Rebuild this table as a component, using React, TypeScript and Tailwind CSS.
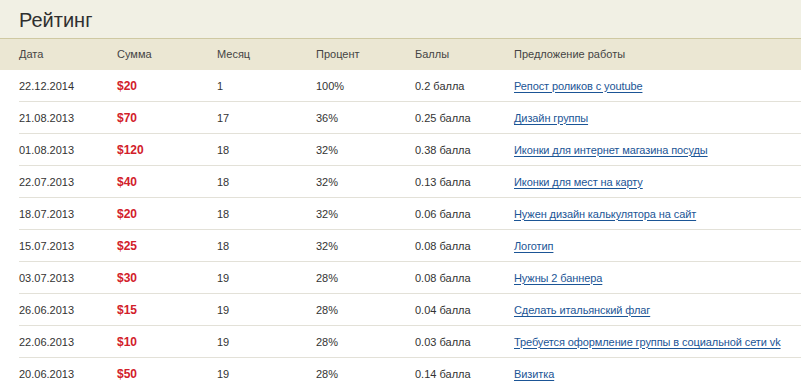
import React from "react";

const rows: [string, string, string, string, string, string][] = [
  ["22.12.2014", "$20", "1", "100%", "0.2 балла", "Репост роликов с youtube"],
  ["21.08.2013", "$70", "17", "36%", "0.25 балла", "Дизайн группы"],
  ["01.08.2013", "$120", "18", "32%", "0.38 балла", "Иконки для интернет магазина посуды"],
  ["22.07.2013", "$40", "18", "32%", "0.13 балла", "Иконки для мест на карту"],
  ["18.07.2013", "$20", "18", "32%", "0.06 балла", "Нужен дизайн калькулятора на сайт"],
  ["15.07.2013", "$25", "18", "32%", "0.08 балла", "Логотип"],
  ["03.07.2013", "$30", "19", "28%", "0.08 балла", "Нужны 2 баннера"],
  ["26.06.2013", "$15", "19", "28%", "0.04 балла", "Сделать итальянский флаг"],
  ["22.06.2013", "$10", "19", "28%", "0.03 балла", "Требуется оформление группы в социальной сети vk"],
  ["20.06.2013", "$50", "19", "28%", "0.14 балла", "Визитка"],
];

const grid = "grid grid-cols-[98px_100px_99px_99px_99px_1fr] items-center";

export default function App() {
  return (
    <div className="w-[801px] h-[385px] overflow-hidden bg-white font-['Liberation_Sans',Arial,sans-serif] text-[11px] text-[#333]">
      <div className="h-[38px] bg-[#f1f0e4] pl-[19px] flex items-center">
        <h1 className="text-[20px] leading-none text-[#2f2f2f] pt-[1px]">Рейтинг</h1>
      </div>
      <div className="h-[1px] bg-[#cfc9a2]" />
      <div className={`${grid} h-[31px] bg-[#ebe7d3] pl-[19px] text-[#444]`}>
        <div>Дата</div>
        <div>Сумма</div>
        <div>Месяц</div>
        <div>Процент</div>
        <div>Баллы</div>
        <div>Предложение работы</div>
      </div>
      <div className="pl-[19px]">
        {rows.map((r, i) => (
          <div key={i} className={`${grid} h-[32px] border-b border-[#e3e1d8] pt-[1px]`}>
            <div>{r[0]}</div>
            <div className="font-bold text-[12px] text-[#d2202a]">{r[1]}</div>
            <div>{r[2]}</div>
            <div>{r[3]}</div>
            <div>{r[4]}</div>
            <div>
              <a href="#" className="text-[#1b5596] underline underline-offset-[2px] tracking-[-0.1px]">{r[5]}</a>
            </div>
          </div>
        ))}
      </div>
    </div>
  );
}
